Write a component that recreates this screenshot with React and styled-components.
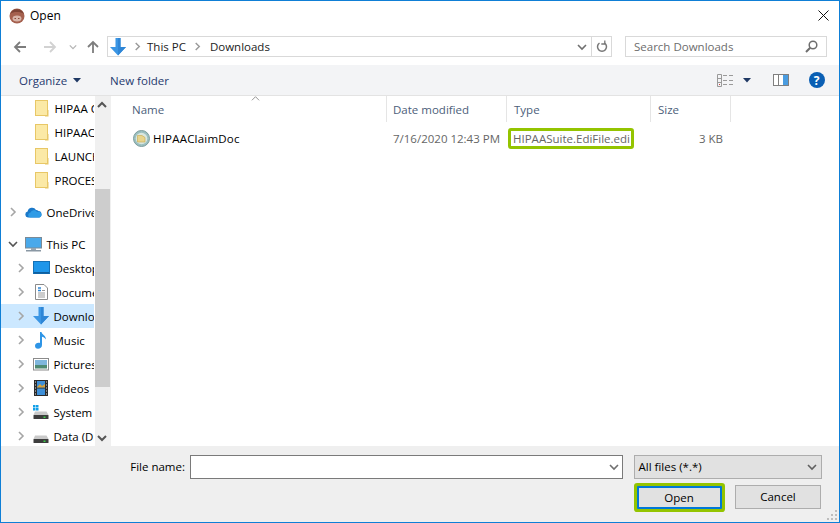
import React from 'react';
import styled, { createGlobalStyle } from 'styled-components';

const GlobalStyle = createGlobalStyle`
  html, body { margin: 0; padding: 0; background: #fff; }
  body { font-family: 'Open Sans', 'Noto Sans', sans-serif; font-size: 11.5px; color: #000; }
  * { box-sizing: border-box; }
`;

// ---- icons ----
const Chevron = ({ dir = 'right', color = '#a6a6a6', size = 10, w = 1.6 }) => {
  const d = {
    right: 'M3 1l4 4-4 4',
    down: 'M1 3l4 4 4-4',
    up: 'M1 7l4-4 4 4',
  }[dir];
  return (
    <svg width={size} height={size} viewBox="0 0 10 10">
      <path d={d} fill="none" stroke={color} strokeWidth={w} />
    </svg>
  );
};

const Arrow = ({ dir, color }) => (
  <svg width="14" height="14" viewBox="0 0 14 14">
    {dir === 'left' && <path d="M13 7H2M7 2L2 7l5 5" fill="none" stroke={color} strokeWidth="1.8" />}
    {dir === 'right' && <path d="M1 7h11M7 2l5 5-5 5" fill="none" stroke={color} strokeWidth="1.8" />}
    {dir === 'up' && <path d="M7 13V2M2 7l5-5 5 5" fill="none" stroke={color} strokeWidth="1.8" />}
  </svg>
);

const DownloadArrow = () => (
  <svg width="16" height="18" viewBox="0 0 16 18">
    <path d="M5.5 0h5v9H16l-8 8.5L0 9h5.5z" fill="#3b96e4" />
    <path d="M8 0h2.500v9H16l-8 8.5z" fill="#2f86d6" />
  </svg>
);

const Avatar = () => (
  <svg width="16" height="16" viewBox="0 0 16 16">
    <circle cx="8" cy="8" r="7.500" fill="#a5604e" />
    <path d="M1 6a7.500 7.500 0 0 1 14 0c-2-1.500-4-2-7-2s-5 .5-7 2z" fill="#7d4234" />
    <ellipse cx="8" cy="10.500" rx="4.500" ry="3" fill="#d8b4a8" />
    <path d="M5.500 10.500h1.500M9 10.500h1.500" stroke="#8a4a3a" strokeWidth="1" />
  </svg>
);

const Folder = () => (
  <svg width="14" height="17" viewBox="0 0 14 17">
    <rect x="0.500" y="0.500" width="12" height="15" fill="#fbe9a6" stroke="#e8c766" />
    <path d="M10 16.500h3.500V10H12v5h-2z" fill="#e8c766" />
  </svg>
);

const Cloud = () => (
  <svg width="17" height="12" viewBox="0 0 17 12">
    <path d="M3 11.500a3 3 0 0 1-.4-5.900A4.500 4.500 0 0 1 11 4a3.500 3.500 0 0 1 2.500 1A3.300 3.300 0 0 1 14 11.500z" fill="#1a78c9" />
    <path d="M5 11.500a2.500 2.500 0 0 1 .5-4.900 3.500 3.500 0 0 1 6.500-.5 3 3 0 0 1 2.800 5.400z" fill="#2e9be6" />
  </svg>
);

const Monitor = () => (
  <svg width="17" height="15" viewBox="0 0 17 15">
    <rect x="0.500" y="0.500" width="16" height="10.500" fill="#4aa9ea" stroke="#7b8a96" />
    <rect x="6" y="11" width="5" height="2" fill="#9aa6b0" />
    <rect x="1" y="13" width="15" height="1.500" fill="#8a98a4" />
  </svg>
);

const Desktop = () => (
  <svg width="17" height="14" viewBox="0 0 17 14">
    <rect x="0.500" y="0.500" width="16" height="12" fill="#1e96ea" stroke="#1470b5" />
    <rect x="1" y="11" width="15" height="1.500" fill="#0f5f9e" />
  </svg>
);

const Doc = () => (
  <svg width="13" height="16" viewBox="0 0 13 16">
    <path d="M.5.500h8.500l3.500 3.500v11.500H.5z" fill="#fff" stroke="#8b8b8b" />
    <path d="M3 4h3M3 6.500h3" stroke="#2f86d6" strokeWidth="1.400" />
    <path d="M3 9h7M3 11h7M3 13h7M7 6.500h3" stroke="#9a9a9a" strokeWidth="1" />
  </svg>
);

const Music = () => (
  <svg width="12" height="17" viewBox="0 0 12 17">
    <path d="M5 0h1.500c.4 2.500 4.500 3.500 4.500 7.500-1-1.500-2.500-2.500-4-2.800V13c0 2.500-2 3.800-4 3.800S0 15.500 0 13.800s1.800-3 3.500-3c.6 0 1.100.1 1.500.3z" fill="#2e95e6" />
  </svg>
);

const Pictures = () => (
  <svg width="16" height="13" viewBox="0 0 16 13">
    <rect x="0.500" y="0.500" width="15" height="11.500" fill="#fff" stroke="#8b8b8b" />
    <rect x="2" y="2" width="12" height="5" fill="#7fb6dc" />
    <rect x="2" y="7" width="12" height="3.500" fill="#4f8a72" />
  </svg>
);

const Videos = () => (
  <svg width="14" height="16" viewBox="0 0 14 16">
    <rect width="14" height="16" fill="#2a2a2a" />
    <rect x="3" y="1" width="8" height="6.500" fill="#3d8fd8" />
    <rect x="3" y="8.500" width="8" height="6.500" fill="#3d8fd8" />
    <path d="M3 7l3-3 2 2 3-2v3.500H3z" fill="#d8a23a" />
    <path d="M1 2h1M1 5h1M1 8h1M1 11h1M1 14h1M12 2h1M12 5h1M12 8h1M12 11h1M12 14h1" stroke="#ddd" strokeWidth="1.200" />
  </svg>
);

const Drive = ({ win }) => (
  <svg width="16" height="16" viewBox="0 0 16 16">
    {win && <path d="M0 1h2.500v2.500H0zM3 1h2.500v2.500H3zM0 4h2.500v2.500H0zM3 4h2.500v2.500H3z" fill="#12a0e8" />}
    <path d="M2 7.500h11.500L15.500 11H.5z" fill="#c9c9c9" />
    <rect x="0.500" y="11" width="15" height="4" rx="0.500" fill="#3d3d3d" />
    <rect x="10.500" y="12.500" width="2" height="1.500" fill="#3ed04a" />
  </svg>
);

const DocFile = () => (
  <svg width="17" height="17" viewBox="0 0 17 17">
    <circle cx="8.500" cy="8.500" r="8" fill="#9cc0c0" stroke="#7d9c9c" />
    <circle cx="8.500" cy="8.500" r="5.800" fill="#d9e6df" />
    <path d="M4.500 5.500h4.500l3 2v4.500h-7.500z" fill="#e8d48c" stroke="#c7a94a" strokeWidth=".6" />
  </svg>
);

const Refresh = () => (
  <svg width="12" height="13" viewBox="0 0 12 13">
    <path d="M3.500 3a4.500 4.500 0 1 0 5 0" fill="none" stroke="#777" strokeWidth="1.500" />
    <path d="M8.800.5v3.500h-3.500" fill="none" stroke="#777" strokeWidth="1.300" />
  </svg>
);

const SearchGlass = () => (
  <svg width="13" height="13" viewBox="0 0 13 13">
    <circle cx="8" cy="5" r="3.800" fill="none" stroke="#6e6e6e" strokeWidth="1.500" />
    <path d="M5.200 7.800L1 12" stroke="#6e6e6e" strokeWidth="2" />
  </svg>
);

const CloseX = () => (
  <svg width="11" height="11" viewBox="0 0 11 11">
    <path d="M.5.500l10 10M10.500.500l-10 10" stroke="#111" strokeWidth="1" />
  </svg>
);

const ViewIcon = () => (
  <svg width="16" height="13" viewBox="0 0 16 13">
    <path d="M.5.500h4v12h-4zM.5 4.500h4M.5 8.500h4" fill="none" stroke="#9a9a9a" />
    <path d="M6 1.500h4M12 1.500h4M6 6.500h4M12 6.500h4M6 10.500h4M12 10.500h4" stroke="#9a9a9a" />
    <rect x="2" y="10" width="1" height="1" fill="#d04040" />
  </svg>
);

const PaneIcon = () => (
  <svg width="16" height="12" viewBox="0 0 16 12">
    <rect x="0.500" y="0.500" width="15" height="11" fill="#fff" stroke="#7f7f7f" />
    <rect x="5" y="1" width="1" height="10" fill="#7f7f7f" />
    <rect x="10" y="1" width="5" height="10" fill="#4a9ce0" />
  </svg>
);

const Caret = ({ color = '#1f3864' }) => (
  <svg width="8" height="5" viewBox="0 0 8 5">
    <path d="M0 0h8L4 4.500z" fill={color} />
  </svg>
);

const Grip = () => (
  <svg width="12" height="12" viewBox="0 0 12 12">
    <path d="M9 1h2v2H9zM5 5h2v2H5zM9 5h2v2H9zM1 9h2v2H1zM5 9h2v2H5zM9 9h2v2H9z" fill="#bdbdbd" />
  </svg>
);

// ---- data ----
const navItems = [
  { label: 'HIPAA Claim', indent: 33.5, icon: <Folder />, gap: 6 },
  { label: 'HIPAAClaim', indent: 33.5, icon: <Folder />, gap: 6 },
  { label: 'LAUNCH', indent: 33.5, icon: <Folder />, gap: 6 },
  { label: 'PROCESS', indent: 33.5, icon: <Folder />, gap: 6 },
  { label: 'OneDrive', chev: 'right', chevX: 6.5, icon: <Cloud />, indent: 23.5, top: 8, gap: 5 },
  { label: 'This PC', chev: 'down', chevX: 6.5, icon: <Monitor />, indent: 23.5, top: 8, gap: 5, dark: true },
  { label: 'Desktop', chev: 'right', chevX: 14.5, icon: <Desktop />, indent: 31.5, gap: 5 },
  { label: 'Documents', chev: 'right', chevX: 14.5, icon: <Doc />, indent: 33.5, gap: 6 },
  { label: 'Downloads', chev: 'right', chevX: 14.5, icon: <DownloadArrow />, indent: 31.5, gap: 5, selected: true },
  { label: 'Music', chev: 'right', chevX: 14.5, icon: <Music />, indent: 33.5, gap: 7 },
  { label: 'Pictures', chev: 'right', chevX: 14.5, icon: <Pictures />, indent: 31.5, gap: 5 },
  { label: 'Videos', chev: 'right', chevX: 14.5, icon: <Videos />, indent: 32.5, gap: 6 },
  { label: 'System (C:)', chev: 'right', chevX: 14.5, icon: <Drive win />, indent: 31.5, gap: 5 },
  { label: 'Data (D:)', chev: 'right', chevX: 14.5, icon: <Drive />, indent: 31.5, gap: 5 },
];

const NavRowItem = ({ item }) => (
  <NavRow $selected={item.selected} $top={item.top} $left={item.chev ? item.chevX : item.indent}>
    {item.chev && (
      <ChevSlot $width={item.indent - item.chevX}>
        <Chevron dir={item.chev} color={item.dark ? '#555' : '#a6a6a6'} />
      </ChevSlot>
    )}
    <NavIcon $gap={item.gap}>{item.icon}</NavIcon>
    <NavLabel>{item.label}</NavLabel>
  </NavRow>
);

const App = () => (
  <>
    <GlobalStyle />
    <Dialog>
      <TitleBar>
        <TitleLeft>
          <Avatar />
          <span>Open</span>
        </TitleLeft>
        <CloseX />
      </TitleBar>

      <AddressRow>
        <NavButtons>
          <Arrow dir="left" color="#7d7d7d" />
          <ForwardSlot><Arrow dir="right" color="#d2d2d2" /></ForwardSlot>
          <RecentSlot><Chevron dir="down" color="#b5b5b5" size={8} /></RecentSlot>
          <Arrow dir="up" color="#7d7d7d" />
        </NavButtons>
        <AddressBox>
          <Crumbs>
            <DownloadArrow />
            <CrumbSep><Chevron color="#9a9a9a" size={9} /></CrumbSep>
            <span>This PC</span>
            <CrumbSep $right={8}><Chevron color="#9a9a9a" size={9} /></CrumbSep>
            <span>Downloads</span>
          </Crumbs>
          <AddrDrop><Chevron dir="down" color="#707070" /></AddrDrop>
          <AddrRefresh><Refresh /></AddrRefresh>
        </AddressBox>
        <SearchBox>
          <span>Search Downloads</span>
          <SearchGlass />
        </SearchBox>
      </AddressRow>

      <Toolbar>
        <ToolLeft>
          <ToolItem>Organize <Caret /></ToolItem>
          <ToolItem>New folder</ToolItem>
        </ToolLeft>
        <ToolRight>
          <ViewGroup><ViewIcon /><Caret /></ViewGroup>
          <PaneIcon />
          <HelpIcon>?</HelpIcon>
        </ToolRight>
      </Toolbar>

      <Main>
        <NavPane>
          <NavList>
            {navItems.map((item) => <NavRowItem key={item.label} item={item} />)}
          </NavList>
          <ScrollBar>
            <ScrollBtn><Chevron dir="up" color="#555" w={2} /></ScrollBtn>
            <ScrollTrack><ScrollThumb /></ScrollTrack>
            <ScrollBtn><Chevron dir="down" color="#555" w={2} /></ScrollBtn>
          </ScrollBar>
        </NavPane>

        <FilePane>
          <ColumnHeader>
            <SortArrow><Chevron dir="up" color="#8a8a8a" size={9} w={1} /></SortArrow>
            <HeaderCell $width={262}>Name</HeaderCell>
            <HeaderCell $width={120} $pad={6}>Date modified</HeaderCell>
            <HeaderCell $width={144}>Type</HeaderCell>
            <HeaderCell $width={80}>Size</HeaderCell>
          </ColumnHeader>
          <FileRow>
            <NameCell>
              <DocFile />
              <FileName>HIPAAClaimDoc</FileName>
            </NameCell>
            <DateCell>7/16/2020 12:43 PM</DateCell>
            <TypeCell><TypeMark>HIPAASuite.EdiFile.edi</TypeMark></TypeCell>
            <SizeCell>3 KB</SizeCell>
          </FileRow>
        </FilePane>
      </Main>

      <Footer>
        <FooterRow>
          <FileLabel>File name:</FileLabel>
          <FileInput>
            <Chevron dir="down" color="#707070" />
          </FileInput>
          <FilterSelect>
            <span>All files (*.*)</span>
            <Chevron dir="down" color="#606060" />
          </FilterSelect>
        </FooterRow>
        <ButtonRow>
          <OpenButton>Open</OpenButton>
          <CancelButton>Cancel</CancelButton>
        </ButtonRow>
        <GripSlot><Grip /></GripSlot>
      </Footer>
    </Dialog>
  </>
);

export default App;

// ---- styles ----
const Dialog = styled.div`
  width: 840px;
  height: 523px;
  border: 1.5px solid #0f7fd6;
  background: #fff;
  display: flex;
  flex-direction: column;
  overflow: hidden;
`;

const TitleBar = styled.div`
  height: 29px;
  flex: none;
  padding: 0 10px 0 8px;
  display: flex;
  align-items: center;
  justify-content: space-between;
  font-size: 12px;
`;

const TitleLeft = styled.div`
  display: flex;
  align-items: center;
  gap: 5px;
`;

const AddressRow = styled.div`
  height: 35px;
  flex: none;
  padding: 6px 11px 8px 12px;
  display: flex;
  align-items: stretch;
`;

const NavButtons = styled.div`
  width: 94px;
  flex: none;
  display: flex;
  align-items: center;
`;

const ForwardSlot = styled.div`
  display: flex;
  margin-left: 16px;
`;

const RecentSlot = styled.div`
  display: flex;
  margin: 0 9px 0 12px;
`;

const AddressBox = styled.div`
  width: 505px;
  flex: none;
  border: 1px solid #d9d9d9;
  display: flex;
  align-items: center;
`;

const Crumbs = styled.div`
  flex: 1;
  display: flex;
  align-items: center;
  padding-left: 2px;
  color: #222;
`;

const CrumbSep = styled.div`
  display: flex;
  margin: 0 ${(p) => p.$right || 5}px 0 7px;
`;

const AddrDrop = styled.div`
  width: 19px;
  height: 100%;
  display: flex;
  align-items: center;
  justify-content: center;
`;

const AddrRefresh = styled.div`
  width: 20px;
  height: 100%;
  border-left: 1px solid #d9d9d9;
  display: flex;
  align-items: center;
  justify-content: center;
`;

const SearchBox = styled.div`
  width: 202px;
  flex: none;
  margin-left: 13px;
  padding: 0 8px;
  border: 1px solid #d9d9d9;
  display: flex;
  align-items: center;
  justify-content: space-between;
  color: #6d6d6d;
`;

const Toolbar = styled.div`
  height: 31px;
  flex: none;
  background: #f3f4f6;
  border-bottom: 1px solid #e3e3e3;
  padding: 0 14.500px 0 18px;
  display: flex;
  align-items: center;
  justify-content: space-between;
`;

const ToolLeft = styled.div`
  display: flex;
  align-items: center;
  gap: 29px;
`;

const ToolItem = styled.div`
  display: flex;
  align-items: center;
  gap: 6px;
  color: #1f3a6e;
`;

const ToolRight = styled.div`
  display: flex;
  align-items: center;
  gap: 20px;
`;

const ViewGroup = styled.div`
  display: flex;
  align-items: center;
  gap: 10px;
  margin-right: 2px;
`;

const HelpIcon = styled.div`
  width: 16px;
  height: 16px;
  border-radius: 50%;
  background: #0a5fb4;
  color: #fff;
  font-size: 12px;
  font-weight: 700;
  display: flex;
  align-items: center;
  justify-content: center;
`;

const Main = styled.div`
  flex: 1;
  min-height: 0;
  display: flex;
`;

const NavPane = styled.div`
  width: 110px;
  flex: none;
  display: flex;
  border-right: 1px solid #f0f0f0;
`;

const NavList = styled.div`
  width: 92.500px;
  flex: none;
  overflow: hidden;
`;

const NavRow = styled.div`
  height: 24px;
  margin-top: ${(p) => p.$top || 0}px;
  padding-left: ${(p) => p.$left}px;
  background: ${(p) => (p.$selected ? '#cce8ff' : 'transparent')};
  display: flex;
  align-items: center;
  white-space: nowrap;
`;

const ChevSlot = styled.div`
  width: ${(p) => p.$width}px;
  flex: none;
  display: flex;
`;

const NavIcon = styled.div`
  display: flex;
  margin-right: ${(p) => p.$gap}px;
`;

const NavLabel = styled.span`
  color: #000;
`;

const ScrollBar = styled.div`
  width: 15.500px;
  margin-left: 1px;
  flex: none;
  background: #f0f0f0;
  display: flex;
  flex-direction: column;
`;

const ScrollBtn = styled.div`
  height: 17px;
  flex: none;
  display: flex;
  align-items: center;
  justify-content: center;
`;

const ScrollTrack = styled.div`
  flex: 1;
  padding: 76px 0 42px;
  display: flex;
`;

const ScrollThumb = styled.div`
  flex: 1;
  background: #cdcdcd;
`;

const FilePane = styled.div`
  flex: 1;
  min-width: 0;
  padding-left: 1px;
`;

const ColumnHeader = styled.div`
  position: relative;
  height: 26px;
  padding-left: 13px;
  display: flex;
`;

const SortArrow = styled.div`
  position: absolute;
  left: 139px;
  top: -2px;
  display: flex;
`;

const HeaderCell = styled.div`
  width: ${(p) => p.$width}px;
  flex: none;
  padding: 0 0 0 ${(p) => p.$pad || 7}px;
  border-right: 1px solid #e5e5e5;
  display: flex;
  align-items: center;
  color: #4c607a;
`;

const FileRow = styled.div`
  height: 24px;
  margin-top: 4px;
  padding-left: 21px;
  display: flex;
  align-items: center;
`;

const NameCell = styled.div`
  width: 260px;
  flex: none;
  display: flex;
  align-items: center;
  gap: 3px;
`;

const FileName = styled.span`
  letter-spacing: 0.2px;
`;

const DateCell = styled.div`
  width: 115px;
  flex: none;
  color: #666;
`;

const TypeCell = styled.div`
  width: 126px;
  flex: none;
`;

const TypeMark = styled.div`
  width: 126px;
  height: 21px;
  border: 3px solid #94c400;
  border-radius: 3px;
  padding-left: 2px;
  display: flex;
  align-items: center;
  white-space: nowrap;
  overflow: hidden;
  color: #666;
`;

const SizeCell = styled.div`
  width: 89px;
  flex: none;
  text-align: right;
  color: #666;
`;

const Footer = styled.div`
  position: relative;
  height: 76px;
  flex: none;
  background: #efefef;
  padding: 8.500px 17px 0 0;
`;

const FooterRow = styled.div`
  display: flex;
  align-items: center;
`;

const FileLabel = styled.div`
  width: 184px;
  flex: none;
  text-align: right;
`;

const FileInput = styled.div`
  width: 433px;
  height: 24px;
  margin-left: 4.500px;
  flex: none;
  background: #fff;
  border: 1px solid #7a7a7a;
  display: flex;
  align-items: center;
  justify-content: flex-end;
  padding-right: 3px;
`;

const FilterSelect = styled.div`
  width: 188px;
  height: 24px;
  margin-left: 11px;
  flex: none;
  background: #e1e1e1;
  border: 1px solid #adadad;
  display: flex;
  align-items: center;
  justify-content: space-between;
  padding: 0 4px;
`;

const ButtonRow = styled.div`
  margin: 6px 1px 0 auto;
  width: 187px;
  display: flex;
  justify-content: space-between;
  align-items: flex-start;
`;

const OpenButton = styled.div`
  width: 85px;
  height: 23px;
  margin: 1.500px 0 0 2.500px;
  background: #e1e1e1;
  border: 2px solid #0078d7;
  box-shadow: 0 0 0 3px #94c400;
  border-radius: 1px;
  display: flex;
  align-items: center;
  justify-content: center;
`;

const CancelButton = styled.div`
  width: 86px;
  height: 24px;
  background: #e1e1e1;
  border: 1px solid #adadad;
  display: flex;
  align-items: center;
  justify-content: center;
`;

const GripSlot = styled.div`
  position: absolute;
  right: 1px;
  bottom: 1px;
  display: flex;
`;
